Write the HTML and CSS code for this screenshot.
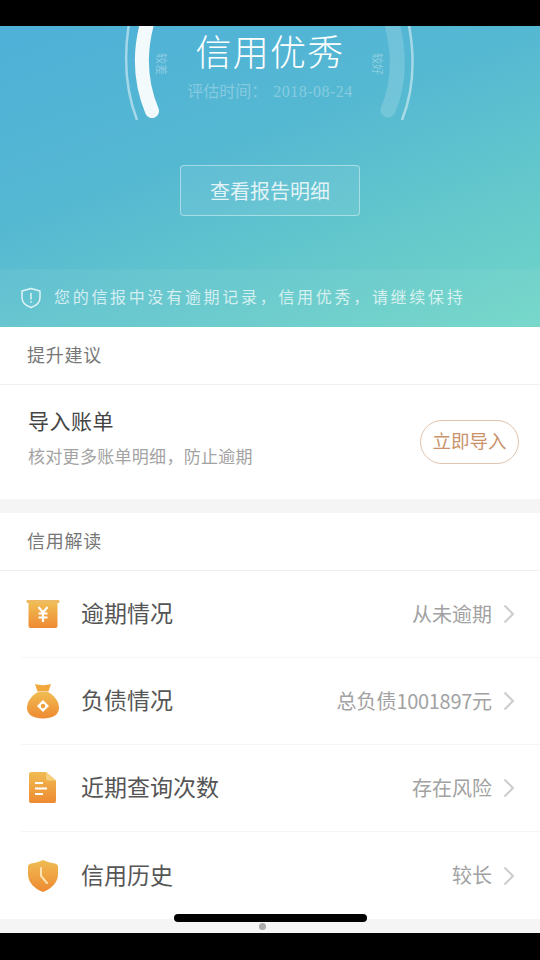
FILE: index.html
```html
<!DOCTYPE html>
<html lang="zh">
<head>
<meta charset="utf-8">
<title>信用优秀</title>
<link rel="stylesheet" href="styles.css">
</head>
<body>
<div class="phone">
  <div class="bar-top"></div>
  <header class="hero">
    <svg class="gauge" width="540" height="130" viewBox="0 0 540 130" aria-hidden="true">
      <path class="g-thin" d="M129.500 -6 Q120 50 137 94"/>
      <path class="g-thin" d="M408 -6 Q419.500 50 402 94"/>
      <path class="g-dim" d="M391 -6 Q405 45 388 84"/>
      <path class="g-main" d="M148 -6 Q134 42 152 85"/>
    </svg>
    <span class="side side-l">较差</span>
    <span class="side side-r">较好</span>
    <div class="hero-main">
      <h1 class="title">信用优秀</h1>
      <p class="date">评估时间：<span class="date-num">2018-08-24</span></p>
      <div class="detail-btn">查看报告明细</div>
    </div>
    <div class="notice">
      <svg class="notice-icon" width="22" height="22" viewBox="0 0 22 22" aria-hidden="true">
        <path d="M11 1.500 L20 4 V10.500 C20 15.500 15.500 19 11 20.500 C6.500 19 2 15.500 2 10.500 V4 Z" fill="none" stroke="currentColor" stroke-width="1.500" stroke-linejoin="round"/>
        <path d="M11 6.500 V12" stroke="currentColor" stroke-width="1.500" stroke-linecap="round"/>
        <circle cx="11" cy="14.800" r="0.900" fill="currentColor"/>
      </svg>
      <span class="notice-text">您的信报中没有逾期记录，信用优秀，请继续保持</span>
    </div>
  </header>

  <section class="card">
    <h2 class="card-head">提升建议</h2>
    <div class="suggest">
      <div class="suggest-text">
        <div class="suggest-title">导入账单</div>
        <div class="suggest-sub">核对更多账单明细，防止逾期</div>
      </div>
      <div class="import-btn">立即导入</div>
    </div>
  </section>

  <section class="card card-second">
    <h2 class="card-head">信用解读</h2>
    <div class="row">
      <svg class="row-icon" width="34" height="30" viewBox="0 0 34 30" aria-hidden="true">
        <defs>
          <linearGradient id="og" x1="0" y1="0" x2="0" y2="1"><stop offset="0" stop-color="#f0bc52"/><stop offset="1" stop-color="#ee8a32"/></linearGradient>
        </defs>
        <rect x="0.500" y="1" width="33" height="3" rx="1" fill="#efbb62"/>
        <path d="M2.500 4 H31.500 V27 a2 2 0 0 1 -2 2 H4.500 a2 2 0 0 1 -2 -2 Z" fill="url(#og)"/>
        <path d="M12.500 8 L17 13.500 L21.500 8 M17 13.500 V23 M12.500 14.500 H21.500 M12.500 18.500 H21.500" fill="none" stroke="#fff" stroke-width="2.200"/>
      </svg>
      <span class="row-label">逾期情况</span>
      <span class="row-value">从未逾期</span>
      <svg class="chev" width="12" height="20" viewBox="0 0 12 20" aria-hidden="true"><path d="M1.500 1.500 L10 10 L1.500 18.500" fill="none" stroke="#cdcdcd" stroke-width="2"/></svg>
    </div>
    <div class="row">
      <svg class="row-icon" width="34" height="38" viewBox="0 0 34 38" aria-hidden="true">
        <path d="M9 2 C13 3.500 21 3.500 25 2 L22.500 9.500 H11.500 Z" fill="#f0a83c"/>
        <path d="M12 10 H22 C29 14 33 20 33 26 C33 33 26 36.500 17 36.500 C8 36.500 1 33 1 26 C1 20 5 14 12 10 Z" fill="url(#og)"/>
        <path d="M17 18 L23 24 L17 30 L11 24 Z" fill="#fff"/>
        <circle cx="17" cy="24" r="2.200" fill="#f3a03a"/>
      </svg>
      <span class="row-label">负债情况</span>
      <span class="row-value">总负债<span class="value-num">1001897</span>元</span>
      <svg class="chev" width="12" height="20" viewBox="0 0 12 20" aria-hidden="true"><path d="M1.500 1.500 L10 10 L1.500 18.500" fill="none" stroke="#cdcdcd" stroke-width="2"/></svg>
    </div>
    <div class="row">
      <svg class="row-icon" width="34" height="32" viewBox="0 0 34 32" aria-hidden="true">
        <path d="M3 2 a2 2 0 0 1 2 -2 H20 L30 8.500 V29 a2 2 0 0 1 -2 2 H5 a2 2 0 0 1 -2 -2 Z" fill="url(#og)"/>
        <path d="M20 0 L30 8.500 H22 a2 2 0 0 1 -2 -2 Z" fill="#f7cf7c"/>
        <path d="M9 11 H17 M9 16.500 H21 M9 22 H17" stroke="#fff" stroke-width="2"/>
      </svg>
      <span class="row-label">近期查询次数</span>
      <span class="row-value">存在风险</span>
      <svg class="chev" width="12" height="20" viewBox="0 0 12 20" aria-hidden="true"><path d="M1.500 1.500 L10 10 L1.500 18.500" fill="none" stroke="#cdcdcd" stroke-width="2"/></svg>
    </div>
    <div class="row">
      <svg class="row-icon" width="34" height="34" viewBox="0 0 34 34" aria-hidden="true">
        <path d="M17 1 C21 3 25 4 29 4.500 Q32 5 32 8 V15 C32 24 25 30 17 33 C9 30 2 24 2 15 V8 Q2 5 5 4.500 C9 4 13 3 17 1 Z" fill="url(#og)"/>
        <path d="M15 9 V17 L21 24" fill="none" stroke="#fbe3b4" stroke-width="2" stroke-linecap="round"/>
      </svg>
      <span class="row-label">信用历史</span>
      <span class="row-value">较长</span>
      <svg class="chev" width="12" height="20" viewBox="0 0 12 20" aria-hidden="true"><path d="M1.500 1.500 L10 10 L1.500 18.500" fill="none" stroke="#cdcdcd" stroke-width="2"/></svg>
    </div>
  </section>
  <div class="footer-gap">
    <span class="home-bar"></span>
    <span class="page-dot"></span>
  </div>
  <div class="bar-bottom"></div>
</div>
</body>
</html>
```

FILE: styles.css
```css
* { box-sizing: border-box; }
html, body { margin: 0; padding: 0; }
body {
  width: 540px;
  height: 960px;
  overflow: hidden;
  background: #000;
  font-family: "Noto Sans CJK SC", "Noto Sans", sans-serif;
}
.phone {
  position: relative;
  width: 540px;
  height: 960px;
  display: flex;
  flex-direction: column;
  background: #f5f5f5;
}
.bar-top { height: 26px; background: #000; flex: none; }
.bar-bottom { height: 27px; background: #000; flex: none; }

.hero {
  position: relative;
  height: 301px;
  flex: none;
  background: linear-gradient(160deg, #4fb0d8 0%, #55b8d2 40%, #66cacb 75%, #70d6c8 100%);
  display: flex;
  flex-direction: column;
}
.gauge { position: absolute; left: 0; top: 0; }
.g-thin { fill: none; stroke: rgba(255,255,255,.48); stroke-width: 2.500; }
.g-dim { fill: none; stroke: rgba(255,255,255,.17); stroke-width: 15; stroke-linecap: round; }
.g-main { fill: none; stroke: #f2fafc; stroke-width: 14; stroke-linecap: round; }
.side {
  position: absolute;
  top: 28px;
  font-size: 11px;
  line-height: 20px;
  width: 24px;
  text-align: center;
  color: rgba(255,255,255,.36);
}
.side-l { left: 150px; transform: rotate(90deg); }
.side-r { left: 366px; transform: rotate(90deg); }

.hero-main {
  position: relative;
  flex: 1;
  padding-top: 4px;
  display: flex;
  flex-direction: column;
  align-items: center;
}
.title {
  margin: 0;
  height: 40px;
  font-size: 36px;
  line-height: 40px;
  font-weight: 300;
  letter-spacing: 1.200px;
  color: #fff;
}
.date {
  margin: 8px 0 0;
  height: 24px;
  font-size: 16px;
  line-height: 24px;
  color: rgba(255,255,255,.3);
}
.date-num {
  margin-left: 6px;
  font-family: "Liberation Serif", serif;
  font-size: 16px;
  letter-spacing: .5px;
}
.detail-btn {
  margin-top: 63px;
  width: 180px;
  height: 51px;
  border: 1px solid rgba(255,255,255,.42);
  border-radius: 4px;
  background: rgba(255,255,255,.07);
  color: rgba(255,255,255,.82);
  font-size: 20px;
  line-height: 49px;
  text-align: center;
}
.notice {
  height: 58px;
  flex: none;
  display: flex;
  align-items: center;
  gap: 12px;
  padding-left: 20px;
  background: rgba(255,255,255,.05);
  color: rgba(255,255,255,.72);
  font-size: 16px;
  letter-spacing: 2.700px;
}
.notice-text { padding-bottom: 4px; }
.notice-icon { flex: none; color: rgba(255,255,255,.8); }

.card { background: #fff; flex: none; }
.card-second { margin-top: 14px; }
.card-head {
  margin: 0;
  height: 58px;
  padding-left: 27px;
  font-size: 18px;
  line-height: 54px;
  font-weight: 400;
  letter-spacing: .750px;
  color: #777;
  border-bottom: 1px solid #f0f0f0;
}
.suggest {
  height: 114px;
  display: flex;
  align-items: center;
  justify-content: space-between;
  padding: 0 21px 0 28px;
}
.suggest-text { align-self: flex-start; padding-top: 20px; }
.suggest-title { font-size: 21px; line-height: 30px; letter-spacing: .5px; color: #444; }
.suggest-sub { margin-top: 9px; font-size: 17px; line-height: 24px; letter-spacing: .300px; color: #a3a3a3; }
.import-btn {
  width: 99px;
  height: 44px;
  border: 1px solid #e0c4b0;
  border-radius: 22px;
  font-size: 18.500px;
  line-height: 38px;
  text-align: center;
  color: #c9926a;
}
.row {
  height: 87px;
  margin-left: 21px;
  display: flex;
  align-items: center;
  position: relative;
  border-bottom: 1px solid #f6f6f6;
  padding-right: 25px;
}
.row:last-child { border-bottom: 0; }
.row-icon { flex: none; width: 34px; margin-left: 5px; }
.row-label {
  margin-left: 21px;
  padding-bottom: 4px;
  font-size: 23px;
  color: #555;
  flex: 1;
}
.row-value { padding-bottom: 2px; font-size: 20px; color: #a2a2a2; margin-right: 11px; }
.value-num { letter-spacing: -.3px; }
.chev { flex: none; }

.footer-gap {
  position: relative;
  flex: 1;
  background: #f5f5f5;
}
.home-bar {
  position: absolute;
  left: 174px;
  top: -5px;
  width: 193px;
  height: 8px;
  border-radius: 4px;
  background: #000;
}
.page-dot {
  position: absolute;
  left: 259px;
  top: 4px;
  width: 7px;
  height: 7px;
  border-radius: 50%;
  background: #aaa;
}
```
